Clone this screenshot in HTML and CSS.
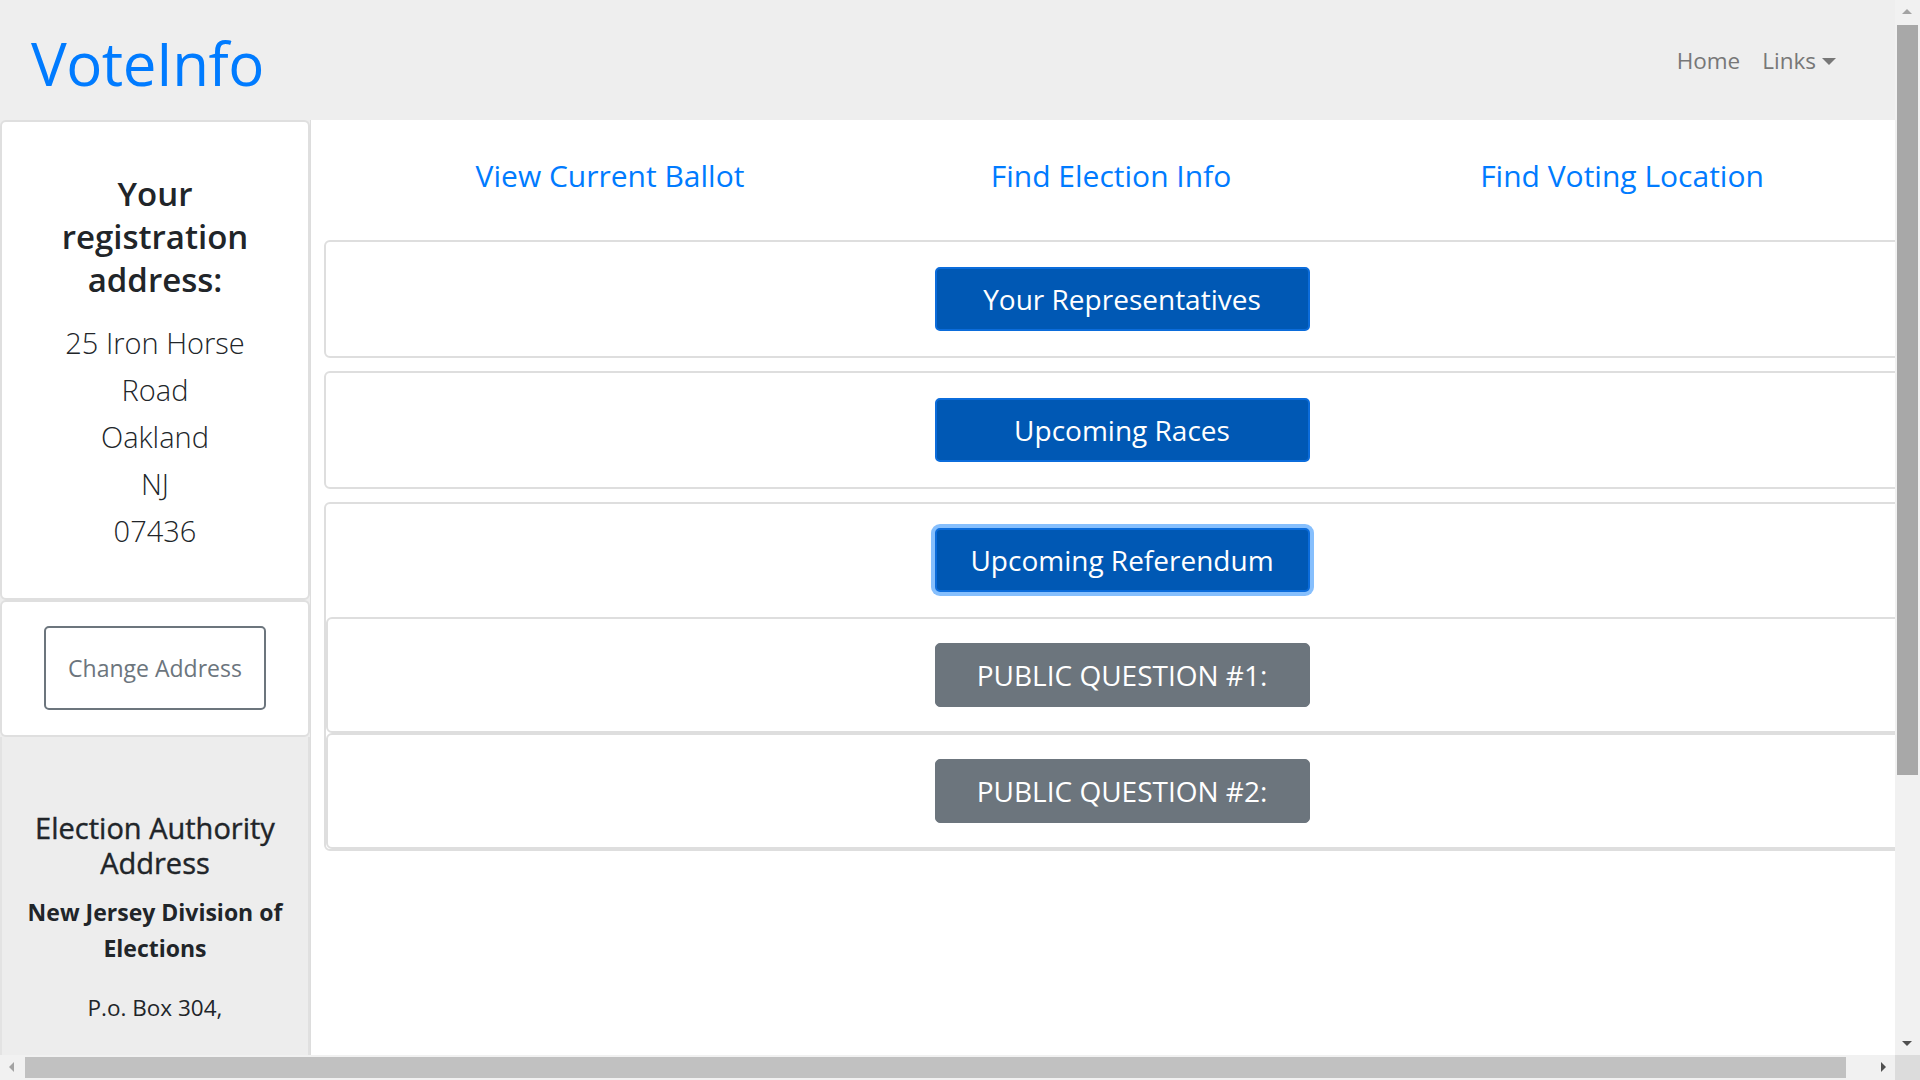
FILE: index.html
```html
<!DOCTYPE html>
<html lang="en">
<head>
<meta charset="utf-8">
<title>VoteInfo</title>
<link rel="stylesheet" href="styles.css">
</head>
<body>
<header class="navbar">
  <a class="brand" href="#">VoteInfo</a>
  <nav class="nav-right">
    <a class="nav-item" href="#">Home</a>
    <a class="nav-item dropdown" href="#">Links<span class="caret"></span></a>
  </nav>
</header>
<div class="layout">
  <aside class="sidebar">
    <section class="card reg-card">
      <h2 class="reg-title">Your registration address:</h2>
      <div class="reg-address">
        <div>25 Iron Horse Road</div>
        <div>Oakland</div>
        <div>NJ</div>
        <div>07436</div>
      </div>
    </section>
    <section class="card change-card">
      <button class="btn-outline" type="button">Change Address</button>
    </section>
    <section class="authority">
      <h3 class="auth-title">Election Authority Address</h3>
      <p class="auth-name">New Jersey Division of Elections</p>
      <p class="auth-line">P.o. Box 304,</p>
    </section>
  </aside>
  <main class="main">
    <nav class="tabs">
      <a class="tab" href="#">View Current Ballot</a>
      <a class="tab" href="#">Find Election Info</a>
      <a class="tab" href="#">Find Voting Location</a>
    </nav>
    <div class="panel">
      <button class="btn btn-primary" type="button">Your Representatives</button>
    </div>
    <div class="panel">
      <button class="btn btn-primary" type="button">Upcoming Races</button>
    </div>
    <div class="panel-group">
      <div class="panel-top">
        <button class="btn btn-primary focused" type="button">Upcoming Referendum</button>
      </div>
      <div class="panel inner">
        <button class="btn btn-secondary" type="button">PUBLIC QUESTION #1:</button>
      </div>
      <div class="panel inner">
        <button class="btn btn-secondary" type="button">PUBLIC QUESTION #2:</button>
      </div>
    </div>
  </main>
</div>
<div class="vscroll">
  <span class="arrow arrow-up"></span>
  <span class="vthumb"></span>
  <span class="arrow arrow-down"></span>
</div>
<div class="hscroll">
  <span class="arrow arrow-left"></span>
  <span class="hthumb"></span>
  <span class="arrow arrow-right"></span>
</div>
<div class="scroll-corner"></div>
</body>
</html>
```
FILE: styles.css
```css
html {
  overflow: hidden;
}
body {
  margin: 0;
  font-family: "Open Sans", "Noto Sans", sans-serif;
  color: #212529;
  background: #fff;
}
a { text-decoration: none; }

.navbar {
  height: 120px;
  background: #eeeeee;
  display: flex;
  align-items: center;
  justify-content: space-between;
  padding: 0 84px 0 31px;
  box-sizing: border-box;
  width: 1920px;
}
.brand {
  font-size: 60px;
  color: #007bff;
  line-height: 1;
  letter-spacing: -0.5px;
  padding-top: 6px;
}
.nav-right {
  display: flex;
  gap: 22px;
  align-items: center;
}
.nav-item {
  font-size: 22.5px;
  color: #777;
}
.caret {
  display: inline-block;
  margin-left: 6px;
  vertical-align: 4px;
  border-top: 7px solid #777;
  border-left: 7px solid transparent;
  border-right: 7px solid transparent;
}

.layout {
  display: flex;
  align-items: stretch;
  min-height: 960px;
}
.sidebar {
  flex: 0 0 310px;
  display: flex;
  flex-direction: column;
  background: #ededed;
  text-align: center;
}
.card {
  background: #fff;
  border: 2px solid #dfdfdf;
  border-radius: 6px;
}
.reg-card {
  padding: 50px 6px 44px;
}
.reg-title {
  margin: 0;
  font-size: 33px;
  line-height: 43px;
  font-weight: 600;
  padding: 0 30px;
}
.reg-address {
  margin-top: 18px;
  font-size: 29px;
  font-weight: 300;
  line-height: 47px;
  padding: 0 40px;
}
.change-card {
  padding: 24px 0 25px;
  display: flex;
  justify-content: center;
}
.btn-outline {
  width: 222px;
  height: 84px;
  border: 2px solid #6c757d;
  border-radius: 5px;
  background: #fff;
  color: #6c757d;
  font-family: inherit;
  font-size: 23px;
}
.authority {
  flex: 1;
  border-left: 2px solid #e3e3e3;
  border-right: 2px solid #e0e0e0;
  padding: 73px 4px 0;
}
.auth-title {
  margin: 0;
  font-size: 29px;
  line-height: 35px;
  font-weight: 500;
  -webkit-text-stroke: 0.4px #212529;
}
.auth-name {
  margin: 14px 0 0;
  font-size: 23px;
  font-weight: 700;
  line-height: 36px;
}
.auth-line {
  margin: 24px 0 0;
  font-size: 22.5px;
  line-height: 36px;
}

.main {
  flex: 0 0 1623px;
  padding: 0 13px;
  box-sizing: border-box;
  border-left: 1px solid #ddd;
}
.tabs {
  display: grid;
  grid-template-columns: repeat(3, 1fr);
  align-items: center;
  justify-items: center;
  height: 110px;
  margin-bottom: 10px;
  padding: 0 45px 0 33px;
}
.tab {
  font-size: 30px;
  color: #007bff;
}
.tab:nth-child(2) {
  margin-right: 10px;
}
.panel {
  border: 2px solid #dedede;
  border-radius: 6px;
  padding: 25px 0;
  display: flex;
  justify-content: center;
  margin-bottom: 13px;
}
.panel-group {
  border: 2px solid #dedede;
  border-radius: 6px;
}
.panel-top {
  padding: 24px 0 25px;
  display: flex;
  justify-content: center;
}
.panel.inner {
  margin: 0;
  padding: 24px 0;
}
.btn {
  width: 375px;
  height: 64px;
  border-radius: 5px;
  font-family: inherit;
  font-size: 28px;
  color: #fff;
  padding: 0;
}
.btn-primary {
  background: #0058b4;
  border: 2px solid #0b6cdb;
}
.btn-primary.focused {
  box-shadow: 0 0 0 4px #86bffd;
}
.btn-secondary {
  background: #6c757d;
  border: 1px solid #6c757d;
}

.vscroll {
  position: fixed;
  top: 0;
  right: 0;
  width: 25px;
  height: 1055px;
  background: #f1f1f1;
}
.vthumb {
  position: absolute;
  top: 25px;
  left: 2px;
  width: 21px;
  height: 750px;
  background: #a8a8a8;
}
.hscroll {
  position: fixed;
  left: 0;
  bottom: 0;
  width: 1895px;
  height: 25px;
  background: #f1f1f1;
}
.hthumb {
  position: absolute;
  top: 2px;
  left: 25px;
  width: 1821px;
  height: 21px;
  background: #c1c1c1;
}
.scroll-corner {
  position: fixed;
  right: 0;
  bottom: 0;
  width: 25px;
  height: 25px;
  background: #dcdcdc;
}
.arrow {
  position: absolute;
  width: 0;
  height: 0;
}
.arrow-up {
  top: 9px;
  left: 7px;
  border-bottom: 5px solid #a3a3a3;
  border-left: 5px solid transparent;
  border-right: 5px solid transparent;
}
.arrow-down {
  bottom: 9px;
  left: 7px;
  border-top: 5px solid #505050;
  border-left: 5px solid transparent;
  border-right: 5px solid transparent;
}
.arrow-left {
  left: 9px;
  top: 7px;
  border-right: 5px solid #a3a3a3;
  border-top: 5px solid transparent;
  border-bottom: 5px solid transparent;
}
.arrow-right {
  right: 9px;
  top: 7px;
  border-left: 5px solid #505050;
  border-top: 5px solid transparent;
  border-bottom: 5px solid transparent;
}
```
